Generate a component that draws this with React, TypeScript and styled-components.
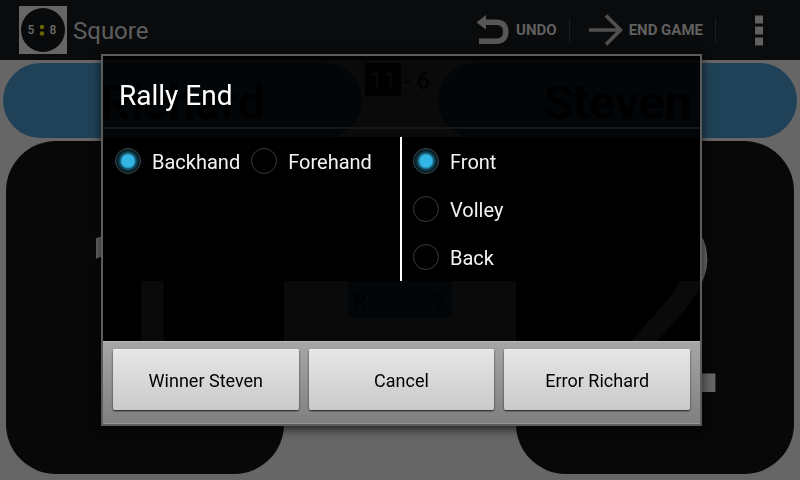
import React, { useState } from "react";
import styled, { createGlobalStyle } from "styled-components";

const GlobalStyle = createGlobalStyle`
  *, *::before, *::after { box-sizing: border-box; }
  body { margin: 0; background: #666666; font-family: Roboto, "Liberation Sans", sans-serif; }
  button { font-family: inherit; }
`;

const Page = styled.div`
  display: flex;
  flex-direction: column;
  min-height: 100vh;
`;

const ActionBar = styled.header`
  display: flex;
  align-items: center;
  height: 60px;
  padding: 0 36px 0 19px;
  background: #0a0b0d;
  color: #666666;
`;

const AppTitle = styled.h1`
  flex: 1;
  margin: 0 0 0 6px;
  padding-top: 2px;
  font-size: 24px;
  line-height: 28px;
  font-weight: 400;
  color: #5e5e5e;
`;

const ActionButton = styled.button`
  display: flex;
  align-items: center;
  gap: 6px;
  height: 48px;
  padding: 0 12px 0 18px;
  border: 0;
  background: none;
  color: #606060;
  font-size: 15px;
  font-weight: 700;
`;

const Separator = styled.span`
  width: 1px;
  height: 24px;
  background: #1b1c1e;
`;

const OverflowButton = styled.button`
  display: flex;
  margin-left: 38px;
  padding: 0;
  border: 0;
  background: none;
`;

const Court = styled.main`
  flex: 1;
  display: flex;
  flex-direction: column;
  gap: 3px;
  padding: 3px 3px 6px;
`;

const NameRow = styled.div`
  display: grid;
  grid-template-columns: 1fr 76px 1fr;
  height: 75px;
`;

const NameButton = styled.button`
  padding: 4px 0 0;
  border: 0;
  border-radius: 38px;
  background: #204258;
  color: #000000;
  font-size: 48px;
  line-height: 56px;
  font-weight: 700;
`;

const GameScore = styled.div`
  display: flex;
  align-items: flex-start;
  gap: 3px;
  padding-left: 3px;
  font-size: 24px;
  line-height: 36px;
  color: #000000;
  white-space: pre;
`;

const LeadScore = styled.span`
  width: 36px;
  height: 33px;
  text-align: center;
  background: #000000;
  color: #666666;
`;

const ScoreRow = styled.div`
  flex: 1;
  display: grid;
  grid-template-columns: 1fr 232px 1fr;
  padding: 0 3px;
`;

const ScoreButton = styled.button`
  padding: 0;
  border: 0;
  border-radius: 50px;
  background: #080808;
  color: #666666;
  font-size: 248px;
  line-height: 288px;
`;

const ServeColumn = styled.div`
  display: flex;
  align-items: center;
  justify-content: center;
  padding-bottom: 20px;
`;

const ServeBadge = styled.span`
  width: 104px;
  padding: 10px 0 0;
  background: #204258;
  color: #000000;
  font-family: "DejaVu Sans Mono", monospace;
  font-size: 22px;
  line-height: 30px;
  text-align: center;
  white-space: pre;
`;

const Overlay = styled.div`
  position: fixed;
  inset: 0;
  display: flex;
  align-items: center;
  padding: 0 98px 0 101px;
`;

const Dialog = styled.form`
  flex: 1;
  border: 2px solid #5c5c5c;
  background: rgba(0, 0, 0, 0.9);
  background-clip: padding-box;
  box-shadow: 0 3px 10px rgba(0, 0, 0, 0.7);
`;

const DialogTitle = styled.h2`
  margin: 0;
  padding: 24px 16px 15px;
  border-bottom: 2px solid #14171a;
  color: #ffffff;
  font-size: 28px;
  line-height: 32px;
  font-weight: 400;
`;

const Options = styled.div`
  display: grid;
  grid-template-columns: 1fr 1fr;
  margin: 8px 0 60px;
  padding-right: 3px;
  background: #000000;
`;

const OptionGroup = styled.div<{ $stacked?: boolean }>`
  display: flex;
  flex-direction: ${(p) => (p.$stacked ? "column" : "row")};
  align-items: flex-start;
  padding-left: ${(p) => (p.$stacked ? "0" : "1px")};
  border-left: ${(p) => (p.$stacked ? "2px solid #ffffff" : "0")};
`;

const Option = styled.label`
  display: flex;
  align-items: center;
  gap: 11px;
  height: 48px;
  padding-left: 11px;
  color: #f3f3f3;
  font-size: 20px;
  line-height: 24px;
`;

const OptionText = styled.span`
  padding-top: 2px;
`;

const Radio = styled.input`
  appearance: none;
  width: 26px;
  height: 26px;
  margin: 0;
  border: 1px solid #3a3a3a;
  border-radius: 50%;
  background: #000000;

  &:checked {
    border-color: #3c4a50;
    background: radial-gradient(circle, #33b5e5 0 6px, #16566e 8px, #0a2833 10px, #05141a 12px);
  }
`;

const ButtonBar = styled.div`
  display: grid;
  grid-template-columns: repeat(3, 1fr);
  gap: 10px;
  padding: 7px 10px 13px;
  border: 1px solid #989898;
  border-width: 1px 0;
  border-top-color: #b8b8b8;
  background: linear-gradient(#a6a6a6, #808080);
`;

const DialogButton = styled.button`
  height: 61px;
  padding: 2px 0 0;
  border: 0;
  border-radius: 2px;
  background: linear-gradient(#e6e6e6, #cacaca);
  box-shadow: 0 1px 2px rgba(0, 0, 0, 0.8), inset 0 1px 0 #f2f2f2;
  color: #000000;
  font-size: 18px;
  line-height: 24px;
`;

const AppLogo = () => (
  <svg width="48" height="48" viewBox="0 0 48 48" role="img" aria-label="5:8">
    <rect width="48" height="48" fill="#666666" />
    <circle cx="24" cy="24" r="22" fill="#090a0b" />
    <text x="12" y="28" textAnchor="middle" fontSize="12" fontWeight="500" fill="#6c6c6c">5</text>
    <text x="34" y="28" textAnchor="middle" fontSize="12" fontWeight="500" fill="#6c6c6c">8</text>
    <circle cx="23" cy="21" r="2.2" fill="#6b6600" />
    <circle cx="23" cy="27.5" r="2.2" fill="#6b6600" />
  </svg>
);

const UndoIcon = () => (
  <svg width="34" height="32" viewBox="0 0 34 32" aria-hidden="true">
    <path d="M0.500 8.500 L10 1 V5.500 H20 C28 5.500 32.500 9.500 32.500 17.500 C32.500 25.500 28 30 20 30 H3 V24.500 H20 C25 24.500 27 22 27 17.500 C27 13.500 25 11 20 11 H10 V15.500 Z" fill="#575757" />
  </svg>
);

const ArrowIcon = () => (
  <svg width="35" height="32" viewBox="0 0 35 32" aria-hidden="true">
    <path d="M1 16 H32 M18 1.500 L32.500 16 L18 30.500" fill="none" stroke="#505050" strokeWidth="3.600" />
  </svg>
);

const MoreIcon = () => (
  <svg width="10" height="32" viewBox="0 0 10 32" aria-hidden="true">
    <path d="M1 1.500h8v8H1zM1 12.500h8v8H1zM1 23.500h8v8H1z" fill="#606060" />
  </svg>
);

const strokes = ["Backhand", "Forehand"];
const positions = ["Front", "Volley", "Back"];

type ChoiceProps = {
  name: string;
  values: string[];
  stacked?: boolean;
};

function Choice({ name, values, stacked }: ChoiceProps) {
  const [selected, setSelected] = useState(values[0]);
  return (
    <OptionGroup $stacked={stacked} role="radiogroup" aria-label={name}>
      {values.map((value) => (
        <Option key={value}>
          <Radio
            type="radio"
            name={name}
            value={value}
            checked={selected === value}
            onChange={() => setSelected(value)}
          />
          <OptionText>{value}</OptionText>
        </Option>
      ))}
    </OptionGroup>
  );
}

export default function App() {
  return (
    <>
      <GlobalStyle />
      <Page>
        <ActionBar>
          <AppLogo />
          <AppTitle>Squore</AppTitle>
          <ActionButton type="button"><UndoIcon />UNDO</ActionButton>
          <Separator />
          <ActionButton type="button"><ArrowIcon />END GAME</ActionButton>
          <Separator />
          <OverflowButton type="button" aria-label="More options"><MoreIcon /></OverflowButton>
        </ActionBar>
        <Court>
          <NameRow>
            <NameButton type="button">Richard</NameButton>
            <GameScore><LeadScore>11</LeadScore><span>- 6</span></GameScore>
            <NameButton type="button">Steven</NameButton>
          </NameRow>
          <ScoreRow>
            <ScoreButton type="button">1</ScoreButton>
            <ServeColumn><ServeBadge>R - - 2</ServeBadge></ServeColumn>
            <ScoreButton type="button">2</ScoreButton>
          </ScoreRow>
        </Court>
      </Page>
      <Overlay>
        <Dialog role="dialog" aria-labelledby="dialog-title">
          <DialogTitle id="dialog-title">Rally End</DialogTitle>
          <Options>
            <Choice name="Stroke" values={strokes} />
            <Choice name="Position" values={positions} stacked />
          </Options>
          <ButtonBar>
            <DialogButton type="button">Winner Steven</DialogButton>
            <DialogButton type="button">Cancel</DialogButton>
            <DialogButton type="button">Error Richard</DialogButton>
          </ButtonBar>
        </Dialog>
      </Overlay>
    </>
  );
}
